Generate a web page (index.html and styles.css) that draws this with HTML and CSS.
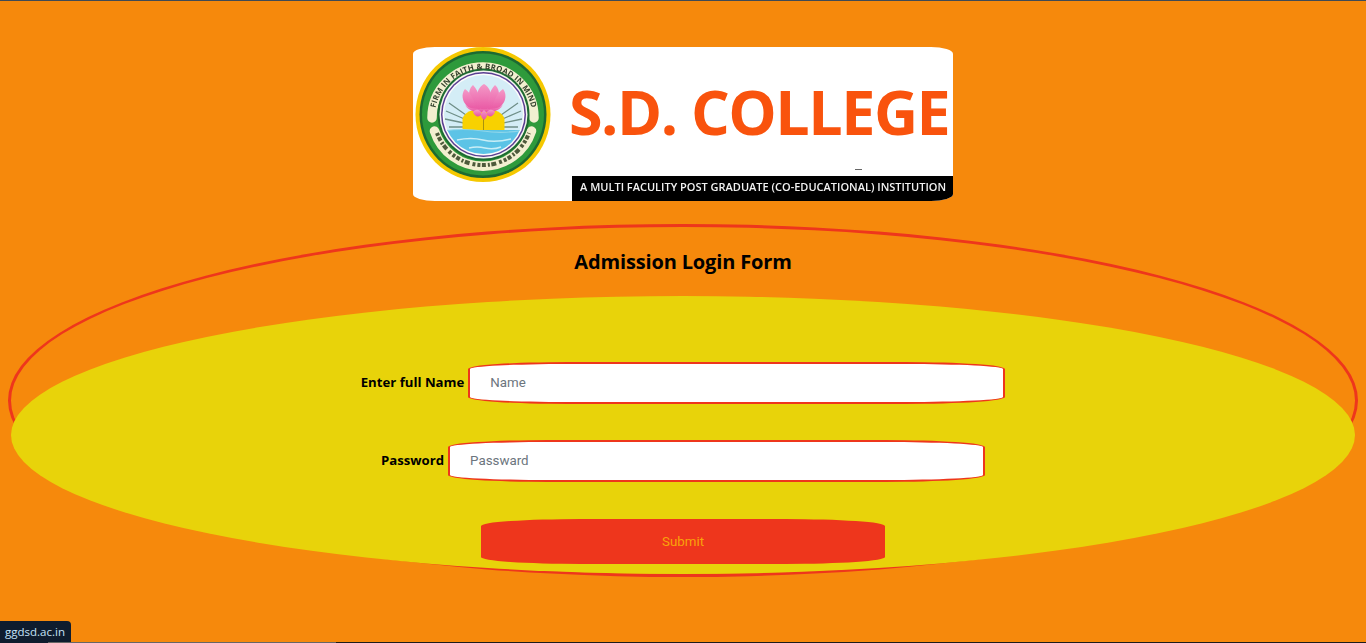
FILE: index.html
```html
<!DOCTYPE html>
<html lang="en">
<head>
<meta charset="utf-8">
<title>Admission Login Form</title>
<link rel="stylesheet" href="styles.css">
</head>
<body>
<main class="page">
  <div class="logo">
    <svg class="logo-art" viewBox="0 0 540 154" width="540" height="154" aria-label="S.D. College logo">
      <defs>
        <filter id="soft"><feGaussianBlur stdDeviation="0.5"/></filter>
        <filter id="softer"><feGaussianBlur stdDeviation="0.35"/></filter>
        <path id="topArc" d="M 21.5 71 A 48.6 48.6 0 1 1 119.5 71"/>
        <clipPath id="innerClip"><circle cx="70.5" cy="67.5" r="39.5"/></clipPath>
        <linearGradient id="petal" x1="0" y1="0" x2="0" y2="1">
          <stop offset="0" stop-color="#f49ac8"/>
          <stop offset="1" stop-color="#e8509f"/>
        </linearGradient>
      </defs>
      <g filter="url(#soft)">
        <circle cx="70" cy="67.5" r="67.5" fill="#f5c800"/>
        <circle cx="70" cy="67.5" r="63.5" fill="#1f6a30"/>
        <circle cx="70" cy="67.5" r="61" fill="#2f9a3a"/>
        <path d="M 19 71 A 51 51 0 1 1 121 71" fill="none" stroke="#f2efd0" stroke-width="9.5" stroke-linecap="round"/>
        <path d="M 21.5 84 A 51 51 0 0 0 118.5 84" fill="none" stroke="#f2efd0" stroke-width="9.5" stroke-linecap="round"/>
        <circle cx="70.5" cy="67.5" r="46" fill="#1f6a30"/>
        <circle cx="70.5" cy="67.5" r="44" fill="#f4f6ef"/>
        <circle cx="70.5" cy="67.5" r="42.5" fill="#5a3d92"/>
        <circle cx="70.5" cy="67.5" r="41" fill="#fbfbfb"/>
        <circle cx="70.5" cy="67.5" r="39.5" fill="#d4edf6"/>
        <g clip-path="url(#innerClip)">
          <g stroke="#6f8f88" stroke-width="1.3">
            <path d="M70 80 L36 56M70 80 L33 64M70 80 L32 72M70 80 L36 80M71 80 L105 56M71 80 L108 64M71 80 L109 72M71 80 L105 80"/>
          </g>
          <path d="M49.5 83 V72 Q52 62 70 62 Q89 62 91.5 72 V83 Z" fill="#f8d100"/>
          <path d="M70.5 64 V83" stroke="#a89210" stroke-width="1"/>
          <rect x="28" y="83" width="86" height="26" fill="#5cc3e6"/>
          <path d="M30 84 Q50 81 70 84 T112 83" stroke="#8fd6ea" stroke-width="1.2" fill="none"/>
          <path d="M44 93 Q58 90 70 93 T98 92" stroke="#c9eef6" stroke-width="1.6" fill="none"/>
          <path d="M56 101 Q64 99 72 101 T88 100" stroke="#c9eef6" stroke-width="1.4" fill="none"/>
        </g>
        <g fill="url(#petal)">
          <path d="M71 37 C62 42 61 56 71 66 C81 56 80 42 71 37Z"/>
          <path d="M60 38 C53 44 55 58 68 66 C68 54 66 44 60 38Z"/>
          <path d="M82 38 C89 44 87 58 74 66 C74 54 76 44 82 38Z"/>
          <path d="M52 42 C47 48 49 60 64 65 C62 54 58 46 52 42Z"/>
          <path d="M90 42 C95 48 93 60 78 65 C80 54 84 46 90 42Z"/>
          <path d="M52 58 C56 65 64 65 71 65 C78 65 86 65 90 58 C86 62 78 62 71 62 C64 62 56 62 52 58Z"/>
          <path d="M60 65 C63 61 68 63 69 67 C66 71 62 70 60 65Z"/>
          <path d="M82 65 C79 61 74 63 73 67 C76 71 80 70 82 65Z"/>
          <path d="M71 63 C67 66 67 70 71 73 C75 70 75 66 71 63Z"/>
        </g>
        <text class="seal-text"><textPath href="#topArc" startOffset="50%" text-anchor="middle">FIRM IN FAITH &amp; BROAD IN MIND</textPath></text>
        <path d="M 24 86 A 49 49 0 0 0 116 86" fill="none" stroke="#4e5a3a" stroke-width="4" stroke-dasharray="3 1.5 4 2 2 1.5 5 3 3 2"/>
      </g>
      <text class="brand" x="156" y="87.5" filter="url(#softer)">S.D. COLLEGE</text>
      <rect x="442" y="122" width="7" height="1" fill="#666"/>
      <rect x="159" y="129" width="381" height="25" fill="#000"/>
      <text class="tagline" x="167" y="144" filter="url(#softer)">A MULTI FACULITY POST GRADUATE (CO-EDUCATIONAL) INSTITUTION</text>
    </svg>
  </div>

  <section class="oval">
    <h1 class="title">Admission Login Form</h1>
    <form class="oval-form">
      <div class="field">
        <label class="field-label" for="name">Enter full Name</label>
        <input class="field-input" id="name" type="text" placeholder="Name">
      </div>
      <div class="field">
        <label class="field-label" for="pass">Password</label>
        <input class="field-input" id="pass" type="password" placeholder="Passward">
      </div>
      <button class="submit" type="button">Submit</button>
    </form>
  </section>
</main>
<div class="screen-edge"></div>
<div class="host-badge">ggdsd.ac.in</div>
</body>
</html>
```
FILE: styles.css
```css
* { box-sizing: border-box; }

html, body { height: 100%; }

body {
  margin: 0;
  background: #f6890c;
  border-top: 1px solid #3f4a55;
  overflow: hidden;
  font-family: "Open Sans", "Liberation Sans", sans-serif;
}

.page {
  display: flex;
  flex-direction: column;
  align-items: center;
  padding-top: 46px;
}

.logo {
  width: 540px;
  height: 154px;
  background: #fff;
  border-radius: 22px / 7px;
  overflow: hidden;
}

.logo-art { display: block; }

.seal-text {
  font: 700 7.8px "Open Sans", sans-serif;
  fill: #33402c;
  letter-spacing: 0.2px;
}

.brand {
  font: 700 61px "Open Sans", sans-serif;
  letter-spacing: -1.5px;
  fill: #f9530b;
}

.tagline {
  font: 600 11px "Open Sans", sans-serif;
  fill: #f2f2f2;
}

.oval {
  width: 1350px;
  height: 353px;
  margin-top: 23px;
  border: 3px solid #ee361c;
  border-radius: 50%;
  display: flex;
  flex-direction: column;
  align-items: center;
}

.title {
  margin: 20px 0 0;
  height: 30px;
  font-size: 20px;
  line-height: 30px;
  font-weight: 700;
  letter-spacing: -0.15px;
  color: #000;
}

.oval-form {
  width: 1344px;
  height: 278px;
  margin-top: 19px;
  background: #e8d30a;
  border-radius: 50%;
  display: flex;
  flex-direction: column;
  align-items: center;
  padding-top: 66px;
}

.field {
  display: flex;
  align-items: center;
  gap: 4px;
  height: 42px;
  margin-bottom: 36px;
}

.field-label {
  padding-bottom: 2px;
  font-size: 13.2px;
  font-weight: 700;
  color: #000;
}

.field-input {
  width: 537px;
  height: 42px;
  padding: 0 20px 2px;
  background: #fff;
  border: 2px solid #ee361c;
  border-radius: 100px / 7px;
  font: 13.33px Roboto, sans-serif;
  color: #333;
  outline: none;
}

.field-input::placeholder { color: #6c757d; opacity: 1; }

.submit {
  width: 404px;
  height: 45px;
  margin-top: 1px;
  padding: 0 0 1px;
  border: 0;
  border-radius: 100px / 7px;
  background: #ee361c;
  color: #f9a30a;
  font: 13.33px Roboto, sans-serif;
}

.screen-edge {
  position: fixed;
  left: 48px;
  right: 0;
  bottom: 0;
  height: 1px;
  background: linear-gradient(to right, #666 288px, #1c1c1c 288px);
}

.host-badge {
  position: fixed;
  left: 0;
  bottom: 0;
  width: 71px;
  height: 22px;
  padding-left: 5px;
  background: #0f1c2e;
  border-top-right-radius: 4px;
  color: #c5e3f8;
  font: 11.5px/21px "Open Sans", sans-serif;
  clip-path: polygon(0 0, 100% 0, 100% 21px, 48px 21px, 48px 100%, 0 100%);
}
```
